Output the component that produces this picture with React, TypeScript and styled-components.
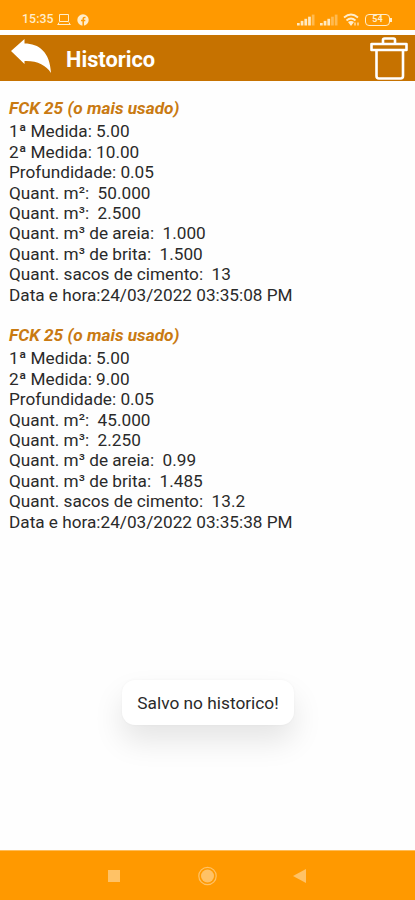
import React from "react";
import styled, { createGlobalStyle } from "styled-components";

const GlobalStyle = createGlobalStyle`
  html, body { margin: 0; padding: 0; background: #fff; }
  * { box-sizing: border-box; }
`;

const Screen = styled.div`
  position: relative;
  display: flex;
  flex-direction: column;
  width: 415px;
  height: 900px;
  overflow: hidden;
  background: #fefefe;
  font-family: Roboto, "Liberation Sans", sans-serif;
  color: #2a2a2a;
`;

const StatusBar = styled.div`
  display: flex;
  align-items: flex-end;
  justify-content: space-between;
  flex: none;
  height: 30px;
  padding: 0 25px 3px 22px;
  background: #ff9900;
  color: #ffedcb;
`;

const StatusGroup = styled.div<{ $gap: number }>`
  display: flex;
  align-items: center;
  height: 15px;
  gap: ${({ $gap }) => $gap}px;
`;

const Clock = styled.span`
  width: 33px;
  font-size: 12.3px;
  line-height: 15px;
  font-weight: 500;
  letter-spacing: 0.1px;
`;

const Header = styled.header`
  display: flex;
  align-items: center;
  flex: none;
  height: 46px;
  margin-top: 5px;
  padding: 0 6px 0 10px;
  background: #c67200;
  color: #fff;
`;

const Title = styled.h1`
  flex: 1;
  margin: 3px 0 0 14px;
  font-size: 21.8px;
  line-height: 26px;
  font-weight: 700;
`;

const IconButton = styled.button`
  display: flex;
  padding: 0;
  border: 0;
  background: none;
  color: inherit;
`;

const History = styled.main`
  flex: 1;
  display: flex;
  flex-direction: column;
  gap: 19px;
  padding: 17px 9px 0;
`;

const Entry = styled.section`
  height: 208px;
`;

const EntryTitle = styled.h2`
  margin: 0 0 3px;
  font-size: 17.25px;
  line-height: 20.4px;
  font-weight: 700;
  font-style: italic;
  color: #c97a12;
`;

const Line = styled.div`
  height: 20.4px;
  font-size: 17.2px;
  line-height: 20.4px;
  white-space: pre;
`;

const Toast = styled.div`
  position: absolute;
  left: 122px;
  top: 680px;
  display: flex;
  align-items: center;
  justify-content: center;
  width: 172px;
  height: 45px;
  border-radius: 13px;
  background: #fff;
  box-shadow: 0 16px 30px rgba(0, 0, 0, 0.1), 0 0 3px rgba(0, 0, 0, 0.04);
  font-size: 17.3px;
  white-space: nowrap;
`;

const NavBar = styled.nav`
  display: flex;
  align-items: center;
  justify-content: space-between;
  flex: none;
  height: 50px;
  padding: 0 107px 0 106px;
  border-top: 1px solid #ffbd59;
  background: #ff9900;
  color: #ffc266;
`;

const BackIcon = () => (
  <svg width="42" height="38" viewBox="0 0 42 38" fill="currentColor">
    <path d="M1 12 14.500 0v4.500C29 4.500 40 13 41 34c-5-8-14-12.500-26.500-12v3Z" />
  </svg>
);

const TrashIcon = () => (
  <svg width="40" height="46" viewBox="0 0 40 46" fill="none" stroke="currentColor" strokeWidth="2.600" strokeLinejoin="round">
    <path d="M14 8V5q0-1.500 1.500-1.500h9Q26 3.500 26 5v3M2.500 9h35v6h-35ZM7.500 15v26q0 2.500 2.500 2.500h21.500q2.500 0 2.500-2.500V15" />
  </svg>
);

const LaptopIcon = () => (
  <svg width="14" height="13" viewBox="0 0 14 13" fill="none" stroke="currentColor" strokeWidth="1">
    <path d="M2.500 1.500h9v7h-9ZM.5 11.500h13M2 9.500l-1 2M12 9.500l1 2" />
  </svg>
);

const FacebookIcon = () => (
  <svg width="12" height="12" viewBox="0 0 12 12">
    <circle cx="6" cy="6" r="5.700" fill="currentColor" />
    <path d="M6.200 12V4.700q0-1.500 2.300-1.300M4 6.500h4.300" fill="none" stroke="#ff9900" strokeWidth="1.500" />
  </svg>
);

const SignalIcon = ({ level }: { level: number }) => (
  <svg width="18" height="12" viewBox="0 0 18 12" fill="currentColor">
    {[0, 1, 2, 3, 4].map((i) => (
      <rect key={i} x={i * 3.7} y={9 - i * 2.1} width="2.700" height={2.5 + i * 2.1} opacity={i < level ? 0.95 : 0.4} />
    ))}
  </svg>
);

const WifiIcon = () => (
  <svg width="17" height="14" viewBox="0 0 17 14" fill="none" stroke="currentColor" strokeWidth="1.800">
    <path d="M1 4.500q7-6 14 0M3.500 7.500q4.500-4 9 0" />
    <path d="m5 9 3 4 3-4q-3-2-6 0Z" fill="currentColor" stroke="none" />
    <path d="M12 9.500v3M15 9.500v3" strokeWidth="1.200" />
  </svg>
);

const Battery = styled.div`
  position: relative;
  display: flex;
  align-items: center;
  justify-content: center;
  width: 25px;
  height: 12px;
  border: 1.5px solid currentColor;
  border-radius: 4px;
  font-size: 9px;
  line-height: 9px;
  font-weight: 700;

  &::after {
    content: "";
    position: absolute;
    right: -3px;
    top: 3px;
    width: 2px;
    height: 4px;
    background: currentColor;
  }
`;

const entries = [
  {
    title: "FCK 25 (o mais usado)",
    lines: [
      "1ª Medida: 5.00",
      "2ª Medida: 10.00",
      "Profundidade: 0.05",
      "Quant. m²:  50.000",
      "Quant. m³:  2.500",
      "Quant. m³ de areia:  1.000",
      "Quant. m³ de brita:  1.500",
      "Quant. sacos de cimento:  13",
      "Data e hora:24/03/2022 03:35:08 PM",
    ],
  },
  {
    title: "FCK 25 (o mais usado)",
    lines: [
      "1ª Medida: 5.00",
      "2ª Medida: 9.00",
      "Profundidade: 0.05",
      "Quant. m²:  45.000",
      "Quant. m³:  2.250",
      "Quant. m³ de areia:  0.99",
      "Quant. m³ de brita:  1.485",
      "Quant. sacos de cimento:  13.2",
      "Data e hora:24/03/2022 03:35:38 PM",
    ],
  },
];

export default function App() {
  return (
    <>
      <GlobalStyle />
      <Screen>
        <StatusBar>
          <StatusGroup $gap={6}>
            <StatusGroup $gap={2}>
              <Clock>15:35</Clock>
              <LaptopIcon />
            </StatusGroup>
            <FacebookIcon />
          </StatusGroup>
          <StatusGroup $gap={5}>
            <SignalIcon level={4} />
            <SignalIcon level={3} />
            <WifiIcon />
            <Battery>54</Battery>
          </StatusGroup>
        </StatusBar>
        <Header>
          <IconButton aria-label="Voltar"><BackIcon /></IconButton>
          <Title>Historico</Title>
          <IconButton aria-label="Apagar"><TrashIcon /></IconButton>
        </Header>
        <History>
          {entries.map((entry, index) => (
            <Entry key={index}>
              <EntryTitle>{entry.title}</EntryTitle>
              {entry.lines.map((line) => <Line key={line}>{line}</Line>)}
            </Entry>
          ))}
        </History>
        <NavBar>
          <svg width="16" height="16" viewBox="0 0 16 16" fill="currentColor"><rect x="2" y="2" width="12" height="12" /></svg>
          <svg width="20" height="20" viewBox="0 0 20 20" fill="currentColor">
            <circle cx="10.500" cy="10" r="6.500" />
            <circle cx="10.500" cy="10" r="8.700" fill="none" stroke="currentColor" strokeWidth="1.200" />
          </svg>
          <svg width="16" height="16" viewBox="0 0 16 16" fill="currentColor"><path d="M1 8 14 1v14Z" /></svg>
        </NavBar>
        <Toast role="status">Salvo no historico!</Toast>
      </Screen>
    </>
  );
}
